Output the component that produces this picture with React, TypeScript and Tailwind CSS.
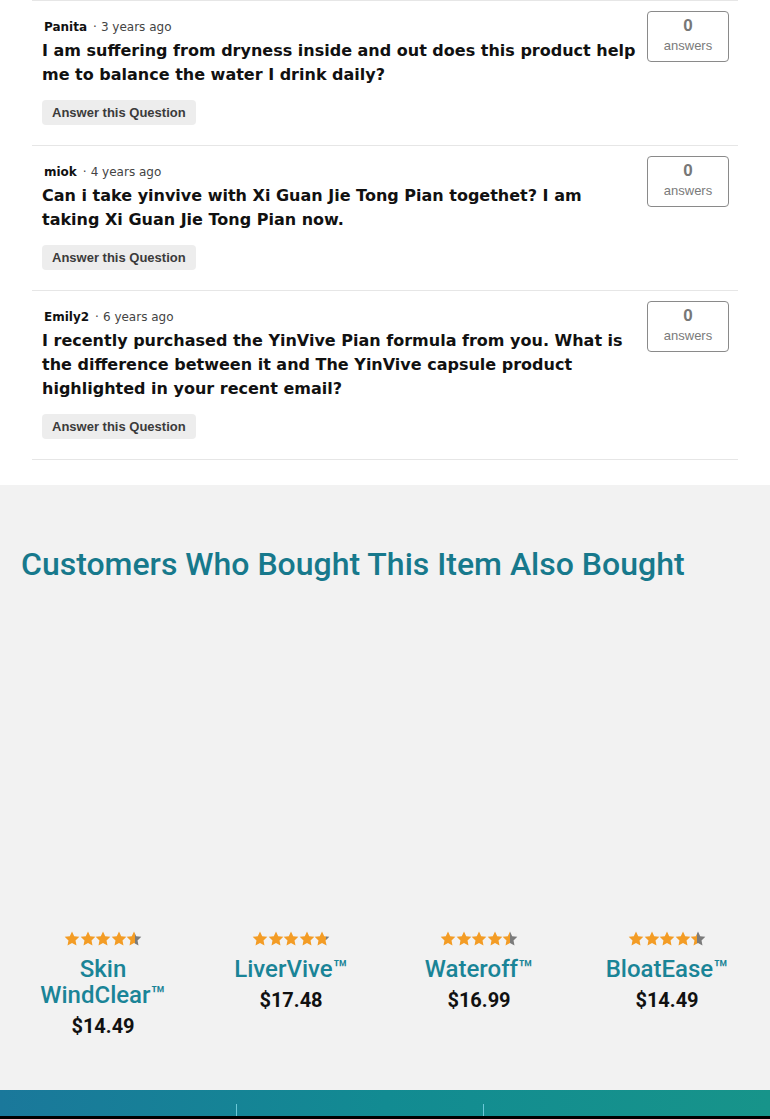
const questions = [
  {
    author: "Panita",
    when: "3 years ago",
    text: "I am suffering from dryness inside and out does this product help me to balance the water I drink daily?",
  },
  {
    author: "miok",
    when: "4 years ago",
    text: "Can i take yinvive with Xi Guan Jie Tong Pian togethet? I am taking Xi Guan Jie Tong Pian now.",
  },
  {
    author: "Emily2",
    when: "6 years ago",
    text: "I recently purchased the YinVive Pian formula from you. What is the difference between it and The YinVive capsule product highlighted in your recent email?",
  },
];

const products = [
  { name: ["Skin", "WindClear"], price: "$14.49", rating: 4.6 },
  { name: ["LiverVive"], price: "$17.48", rating: 4.8 },
  { name: ["Wateroff"], price: "$16.99", rating: 4.5 },
  { name: ["BloatEase"], price: "$14.49", rating: 4.4 },
];

function Star({ fill, id }: { fill: number; id: string }) {
  return (
    <svg width="16" height="15" viewBox="0 0 24 23" aria-hidden="true">
      <defs>
        <linearGradient id={id}>
          <stop offset={`${fill * 100}%`} stopColor="#f39c25" />
          <stop offset={`${fill * 100}%`} stopColor="#7b7b7b" />
        </linearGradient>
      </defs>
      <path
        d="M12 0.8l3.4 7.2 7.8 1-5.8 5.4 1.5 7.8L12 18.4l-6.9 3.8 1.5-7.8L0.8 9l7.8-1z"
        fill={`url(#${id})`}
      />
    </svg>
  );
}

function Stars({ rating, idx }: { rating: number; idx: number }) {
  return (
    <div className="flex justify-center -space-x-[0.5px]">
      {[0, 1, 2, 3, 4].map((i) => (
        <Star key={i} id={`s${idx}-${i}`} fill={Math.max(0, Math.min(1, rating - i))} />
      ))}
    </div>
  );
}

function QuestionRow({ author, when, text }: (typeof questions)[number]) {
  return (
    <div className="flex border-b border-[#e6e6e6] pb-[20px] pl-[10px] pr-[9px] pt-[10px]">
      <div className="flex-1 pt-[7px] pr-[10px]">
        <p className="pl-[2px] text-[12px] leading-[18px] text-[#333] [font-family:'DejaVu_Sans',sans-serif]">
          <span className="font-bold text-[#111]">{author}</span>
          <span className="ml-[6px] text-[#444]">·</span>
          <span className="ml-[4px] text-[#444]">{when}</span>
        </p>
        <p className="mt-[3px] text-[16px] font-bold leading-[24px] text-[#111] [font-family:'DejaVu_Sans',sans-serif]">
          {text}
        </p>
        <button className="mt-[13px] h-[25px] rounded-[4px] bg-[#ededed] px-[10px] text-[13px] font-bold text-[#3b3b3b] [font-family:'Liberation_Sans',Arial,sans-serif]">
          Answer this Question
        </button>
      </div>
      <div className="flex h-[51px] w-[82px] shrink-0 flex-col items-center rounded-[4px] border border-[#8a8a8a] pt-[4px] [font-family:'Liberation_Sans',Arial,sans-serif]">
        <span className="text-[17px] font-bold leading-[20px] text-[#777]">0</span>
        <span className="text-[13px] leading-[20px] text-[#7a7a7a]">answers</span>
      </div>
    </div>
  );
}

export default function App() {
  return (
    <div className="w-[770px] bg-white">
      <section className="px-[32px] pb-[25px]">
        <div className="border-t border-[#e6e6e6]">
          {questions.map((q) => (
            <QuestionRow key={q.author} {...q} />
          ))}
        </div>
      </section>

      <section className="bg-[#f2f2f2] pb-[51px] pt-[59px] [font-family:Roboto,sans-serif]">
        <h2 className="pl-[21px] text-[32px] font-medium leading-[40px] text-[#17798c]">
          Customers Who Bought This Item Also Bought
        </h2>
        <div className="mt-[347px] grid grid-cols-4 px-[9px]">
          {products.map((p, i) => (
            <div key={p.price + i} className="flex flex-col items-center text-center">
              <Stars rating={p.rating} idx={i} />
              <div className="mt-[10px] text-[24px] font-medium leading-[26px] text-[#1a8497]">
                {p.name.map((n, j) => (
                  <div key={n}>
                    {n}
                    {j === p.name.length - 1 && "™"}
                  </div>
                ))}
              </div>
              <div className="mt-[5px] text-[20px] font-bold leading-[26px] text-[#111]">{p.price}</div>
            </div>
          ))}
        </div>
      </section>

      <footer className="bg-gradient-to-r from-[#1a789b] via-[#128b92] to-[#17948a]">
        <div className="flex h-[26px] items-end">
          <div className="w-[236px]" />
          <div className="h-[12px] w-px bg-[#6cc9d8]" />
          <div className="w-[246px]" />
          <div className="h-[12px] w-px bg-[#6cc9d8]" />
        </div>
        <div className="h-[3px] bg-black" />
      </footer>
    </div>
  );
}
